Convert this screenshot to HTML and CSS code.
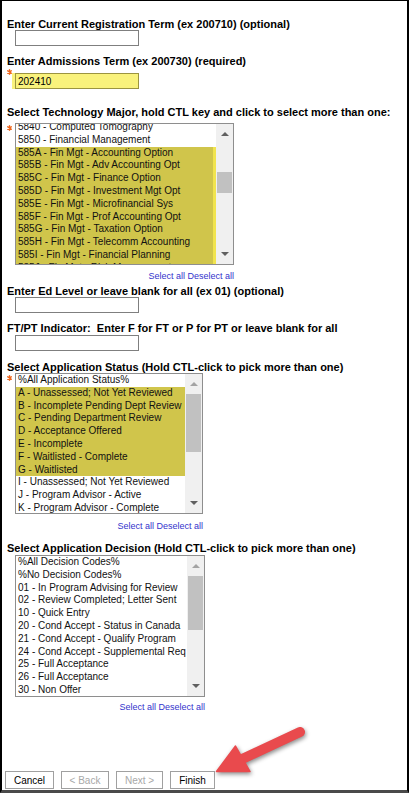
FILE: index.html
```html
<!DOCTYPE html>
<html>
<head>
<meta charset="utf-8">
<link rel="stylesheet" href="styles.css">
</head>
<body>
<div class="frame">
  <div class="label l1">Enter Current Registration Term (ex 200710) (optional)</div>
  <div class="row">
    <span class="slot"></span>
    <input class="txt" type="text" value="">
  </div>

  <div class="label l2">Enter Admissions Term (ex 200730) (required)</div>
  <div class="row r-in2">
    <span class="slot"><svg class="req req-input" width="5" height="6" viewBox="0 0 5 6"><path d="M2.5 0.3V5.7M0.3 1.6L4.7 4.4M0.3 4.4L4.7 1.6" stroke="#f0661c" stroke-width="1.2"/></svg></span>
    <div class="hl-wrap"><input class="txt txt-yellow" type="text" value="202410"></div>
  </div>

  <div class="label l3">Select Technology Major, hold CTL key and click to select more than one:</div>
  <div class="row r-sel1">
    <span class="slot"><svg class="req req-sel" width="5" height="6" viewBox="0 0 5 6"><path d="M2.5 0.3V5.7M0.3 1.6L4.7 4.4M0.3 4.4L4.7 1.6" stroke="#f0661c" stroke-width="1.2"/></svg></span>
    <div class="selcol">
      <div class="listbox lb1">
        <div class="items">
          <div class="opt first-scrolled">5840 - Computed Tomography</div>
          <div class="opt">5850 - Financial Management</div>
          <div class="opt sel strip">585A - Fin Mgt - Accounting Option</div>
          <div class="opt sel strip">585B - Fin Mgt - Adv Accounting Opt</div>
          <div class="opt sel strip">585C - Fin Mgt - Finance Option</div>
          <div class="opt sel strip">585D - Fin Mgt - Investment Mgt Opt</div>
          <div class="opt sel strip">585E - Fin Mgt - Microfinancial Sys</div>
          <div class="opt sel strip">585F - Fin Mgt - Prof Accounting Opt</div>
          <div class="opt sel strip">585G - Fin Mgt - Taxation Option</div>
          <div class="opt sel strip">585H - Fin Mgt - Telecomm Accounting</div>
          <div class="opt sel strip">585I - Fin Mgt - Financial Planning</div>
          <div class="opt sel strip">585J - Fin Mgt - Risk Management</div>
        </div>
        <div class="sb">
          <div class="sbtn"><i class="up"></i></div>
          <div class="track"><div class="thumb t1"></div></div>
          <div class="sbtn"><i class="down"></i></div>
        </div>
      </div>
      <div class="links"><a href="#">Select all</a> <a href="#">Deselect all</a></div>
    </div>
  </div>

  <div class="label l4">Enter Ed Level or leave blank for all (ex 01) (optional)</div>
  <div class="row">
    <span class="slot"></span>
    <input class="txt" type="text" value="">
  </div>

  <div class="label l5">FT/PT Indicator:&nbsp; Enter F for FT or P for PT or leave blank for all</div>
  <div class="row r-in4">
    <span class="slot"></span>
    <input class="txt" type="text" value="">
  </div>

  <div class="label l6">Select Application Status (Hold CTL-click to pick more than one)</div>
  <div class="row">
    <span class="slot"><svg class="req req-sel" width="5" height="6" viewBox="0 0 5 6"><path d="M2.5 0.3V5.7M0.3 1.6L4.7 4.4M0.3 4.4L4.7 1.6" stroke="#f0661c" stroke-width="1.2"/></svg></span>
    <div class="selcol">
      <div class="listbox lb2">
        <div class="items">
          <div class="opt">%All Application Status%</div>
          <div class="opt sel">A - Unassessed; Not Yet Reviewed</div>
          <div class="opt sel">B - Incomplete Pending Dept Review</div>
          <div class="opt sel">C - Pending Department Review</div>
          <div class="opt sel">D - Acceptance Offered</div>
          <div class="opt sel">E - Incomplete</div>
          <div class="opt sel">F - Waitlisted - Complete</div>
          <div class="opt sel">G - Waitlisted</div>
          <div class="opt">I - Unassessed; Not Yet Reviewed</div>
          <div class="opt">J - Program Advisor - Active</div>
          <div class="opt">K - Program Advisor - Complete</div>
        </div>
        <div class="sb">
          <div class="sbtn"><i class="up off"></i></div>
          <div class="track"><div class="thumb t2"></div></div>
          <div class="sbtn"><i class="down"></i></div>
        </div>
      </div>
      <div class="links"><a href="#">Select all</a> <a href="#">Deselect all</a></div>
    </div>
  </div>

  <div class="label l7">Select Application Decision (Hold CTL-click to pick more than one)</div>
  <div class="row r-sel3">
    <span class="slot"></span>
    <div class="selcol">
      <div class="listbox lb3">
        <div class="items">
          <div class="opt">%All Decision Codes%</div>
          <div class="opt">%No Decision Codes%</div>
          <div class="opt">01 - In Program Advising for Review</div>
          <div class="opt">02 - Review Completed; Letter Sent</div>
          <div class="opt">10 - Quick Entry</div>
          <div class="opt">20 - Cond Accept - Status in Canada</div>
          <div class="opt">21 - Cond Accept - Qualify Program</div>
          <div class="opt">24 - Cond Accept - Supplemental Req</div>
          <div class="opt">25 - Full Acceptance</div>
          <div class="opt">26 - Full Acceptance</div>
          <div class="opt">30 - Non Offer</div>
        </div>
        <div class="sb">
          <div class="sbtn"><i class="up off"></i></div>
          <div class="track"><div class="thumb t3"></div></div>
          <div class="sbtn"><i class="down"></i></div>
        </div>
      </div>
      <div class="links"><a href="#">Select all</a> <a href="#">Deselect all</a></div>
    </div>
  </div>

  <div class="buttons">
    <button class="btn b-cancel">Cancel</button>
    <button class="btn b-back dis">&lt; Back</button>
    <button class="btn b-next dis">Next &gt;</button>
    <button class="btn b-finish">Finish</button>
  </div>

  <svg class="arrow" width="410" height="795" viewBox="0 0 410 795">
    <g class="arrow-g">
      <line x1="300" y1="732" x2="240" y2="760" stroke="#e94a4d" stroke-width="10" stroke-linecap="round"/>
      <polygon points="216.5,771.5 235.5,746 250,771.5" fill="#e94a4d" stroke="#e94a4d" stroke-width="1.5" stroke-linejoin="round"/>
    </g>
  </svg>
</div>
</body>
</html>
```
FILE: styles.css
```css
html, body {
  margin: 0;
  padding: 0;
  background: #ffffff;
}

.frame {
  position: relative;
  box-sizing: border-box;
  width: 409px;
  height: 793px;
  border-left: 2px solid #000;
  border-right: 2px solid #000;
  border-top: 1px solid #000;
  border-bottom: 3px solid #4a4a4a;
  padding: 17px 0 0 5px;
  display: flex;
  flex-direction: column;
  align-items: flex-start;
  font-family: "Liberation Sans", Arial, sans-serif;
  color: #000;
}

.label {
  font-size: 11px;
  font-weight: bold;
  line-height: 12px;
  white-space: nowrap;
}

.l2 { margin-top: 9px; }
.l3 { margin-top: 17px; }
.l4 { margin-top: 3px; }
.l5 { margin-top: 9px; }
.l6 { margin-top: 10px; }
.l7 { margin-top: 10px; }

.row {
  display: flex;
  align-items: flex-start;
}

.r-in2 { margin-top: 6px; }
.r-sel1 { margin-top: 5px; }
.r-in4 { margin-top: 1px; }
.r-sel3 { margin-top: 1px; }

.slot {
  width: 8px;
  flex: none;
  position: relative;
  height: 1px;
}

.req {
  display: block;
  filter: drop-shadow(0 0 0.6px rgba(240, 110, 40, 0.6));
}

.req-input { margin-top: -4px; margin-left: 0; }
.req-sel { margin-top: 2px; margin-left: 0; }

.txt {
  box-sizing: border-box;
  width: 124px;
  height: 16px;
  margin: 0;
  padding: 0 2px;
  border: 1px solid #7f7f7f;
  background: #fff;
  font-family: "Liberation Sans", Arial, sans-serif;
  font-size: 10px;
  color: #000;
  outline: none;
}

.hl-wrap {
  margin-left: -3px;
  padding-left: 3px;
  background: #f9f27c;
  display: flex;
}

.txt-yellow {
  background: #f9f27c;
  border-color: #9b9440;
  padding-left: 2px;
}

.selcol {
  display: flex;
  flex-direction: column;
  align-items: flex-end;
}

.listbox {
  box-sizing: border-box;
  display: flex;
  border: 1px solid #8e8e8e;
  background: #fff;
  overflow: hidden;
}

.lb1 { width: 219px; height: 142px; }
.lb2 { width: 188px; height: 141px; }
.lb3 { width: 190px; height: 142px; }

.items {
  flex: 1;
  overflow: hidden;
  min-width: 0;
}

.opt {
  font-size: 10px;
  line-height: 12.8px;
  height: 12.8px;
  padding-left: 2px;
  white-space: nowrap;
  color: #111;
}

.first-scrolled { margin-top: -3px; }

.opt.sel { background: #d0c54b; }
.opt.strip { box-shadow: inset -3px 0 0 #f1e44f; }

.sb {
  width: 17px;
  flex: none;
  background: #f0f0f0;
  display: flex;
  flex-direction: column;
}

.sbtn {
  height: 20px;
  flex: none;
  display: flex;
  align-items: center;
  justify-content: center;
}

.sbtn i {
  display: block;
  width: 0;
  height: 0;
  border-left: 4px solid transparent;
  border-right: 4px solid transparent;
}

.sbtn i.up { border-bottom: 4px solid #606060; }
.sbtn i.down { border-top: 4px solid #606060; }
.sbtn i.up.off { border-bottom-color: #a3a3a3; }

.track {
  flex: 1;
  display: flex;
  flex-direction: column;
  align-items: center;
}

.thumb {
  width: 15px;
  background: #c1c1c1;
}

.t1 { margin-top: 28px; height: 21px; }
.t2 { margin-top: 0; height: 58px; }
.t3 { margin-top: 0; height: 54px; }

.links {
  margin-top: 6px;
  font-size: 9px;
  line-height: 11px;
  white-space: nowrap;
}

.lb2 + .links { margin-top: 7px; }
.lb3 + .links { margin-top: 5px; }

.links a {
  color: #3333cc;
  text-decoration: none;
}

.buttons {
  margin-top: auto;
  margin-bottom: 1px;
  margin-left: -2px;
  display: flex;
  gap: 7px;
}

.btn {
  box-sizing: border-box;
  height: 18px;
  margin: 0;
  padding: 0;
  border: 1px solid #a0a0a0;
  background: #fff;
  font-family: "Liberation Sans", Arial, sans-serif;
  font-size: 10px;
  color: #000;
  border-radius: 0;
}

.b-cancel { width: 49px; }
.b-back { width: 48px; }
.b-next { width: 47px; }
.b-finish { width: 45px; }

.btn.dis { color: #a8a8a8; }

.arrow {
  position: absolute;
  left: -2px;
  top: -1px;
  pointer-events: none;
  overflow: visible;
}

.arrow-g {
  filter: drop-shadow(1px 2px 2px rgba(0, 0, 0, 0.45));
}
```
